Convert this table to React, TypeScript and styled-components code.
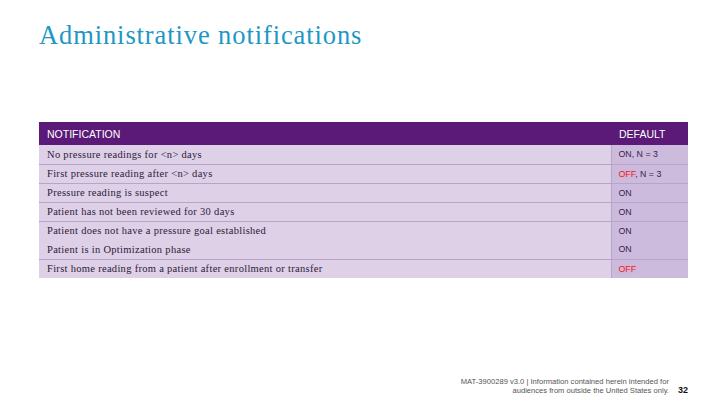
import styled, { createGlobalStyle } from "styled-components";

const GlobalStyle = createGlobalStyle`
    html, body {
        margin: 0;
        padding: 0;
        background: #ffffff;
    }
`;

const Slide = styled.div`
    width: 720px;
    height: 405px;
    box-sizing: border-box;
    padding: 20px 32px 10px 39px;
    display: flex;
    flex-direction: column;
    background: #ffffff;
    overflow: hidden;
`;

const Title = styled.h1`
    margin: 0;
    font-family: "Liberation Serif", "DejaVu Serif", serif;
    font-weight: normal;
    font-size: 26.5px;
    letter-spacing: 0.9px;
    line-height: 30px;
    color: #1d97c4;
`;

const Table = styled.table`
    margin-top: 72px;
    width: 649px;
    border-collapse: collapse;
`;

const HeaderRow = styled.tr`
    background-color: #5b1a78;
    height: 23px;
`;

const HeaderCell = styled.th<{ narrow?: boolean }>`
    padding: 0 8px;
    text-align: left;
    font-family: "Liberation Sans", Arial, sans-serif;
    font-weight: normal;
    font-size: 10.5px;
    color: #ffffff;
    width: ${(props) => (props.narrow ? "61px" : "auto")};
`;

const Row = styled.tr<{ divider?: boolean }>`
    height: 19px;
    border-bottom: ${(props) => (props.divider ? "1px solid #b8a4ca" : "none")};

    &:last-child {
        border-bottom: none;
    }
`;

const NameCell = styled.td`
    padding: 0 8px;
    background-color: #ddd0e7;
    font-family: "Liberation Serif", "DejaVu Serif", serif;
    font-size: 10.5px;
    letter-spacing: 0.3px;
    color: #2e1a3a;
    border-right: 1px solid #b8a4ca;
`;

const ValueCell = styled.td`
    padding: 0 7px;
    background-color: #ccbbdc;
    font-family: "Liberation Sans", Arial, sans-serif;
    font-size: 8.8px;
    color: #3a2050;
    white-space: nowrap;
`;

const Off = styled.span`
    color: #e3243a;
    text-shadow: 0 0 2px rgba(255, 150, 160, 0.8);
`;

const Footer = styled.div`
    margin-top: auto;
    display: flex;
    justify-content: flex-end;
    align-items: flex-end;
    gap: 9px;
`;

const Disclaimer = styled.div`
    font-family: "Liberation Sans", Arial, sans-serif;
    font-size: 7.6px;
    line-height: 9px;
    color: #555555;
    text-align: right;
`;

const PageNumber = styled.div`
    font-family: "Liberation Sans", Arial, sans-serif;
    font-size: 9px;
    font-weight: bold;
    line-height: 9px;
    color: #111111;
`;

const rows: { name: string; value: React.ReactNode; divider: boolean }[] = [
    { name: "No pressure readings for <n> days", value: "ON, N = 3", divider: true },
    { name: "First pressure reading after <n> days", value: <><Off>OFF</Off>, N = 3</>, divider: true },
    { name: "Pressure reading is suspect", value: "ON", divider: true },
    { name: "Patient has not been reviewed for 30 days", value: "ON", divider: true },
    { name: "Patient does not have a pressure goal established", value: "ON", divider: false },
    { name: "Patient is in Optimization phase", value: "ON", divider: true },
    { name: "First home reading from a patient after enrollment or transfer", value: <Off>OFF</Off>, divider: true },
];

export default function App() {
    return (
        <>
            <GlobalStyle />
            <Slide>
                <Title>Administrative notifications</Title>
                <Table>
                    <thead>
                        <HeaderRow>
                            <HeaderCell>NOTIFICATION</HeaderCell>
                            <HeaderCell narrow>DEFAULT</HeaderCell>
                        </HeaderRow>
                    </thead>
                    <tbody>
                        {rows.map((row, index) => (
                            <Row key={index} divider={row.divider}>
                                <NameCell>{row.name}</NameCell>
                                <ValueCell>{row.value}</ValueCell>
                            </Row>
                        ))}
                    </tbody>
                </Table>
                <Footer>
                    <Disclaimer>
                        MAT-3900289 v3.0 | Information contained herein intended for
                        <br />
                        audiences from outside the United States only.
                    </Disclaimer>
                    <PageNumber>32</PageNumber>
                </Footer>
            </Slide>
        </>
    );
}
